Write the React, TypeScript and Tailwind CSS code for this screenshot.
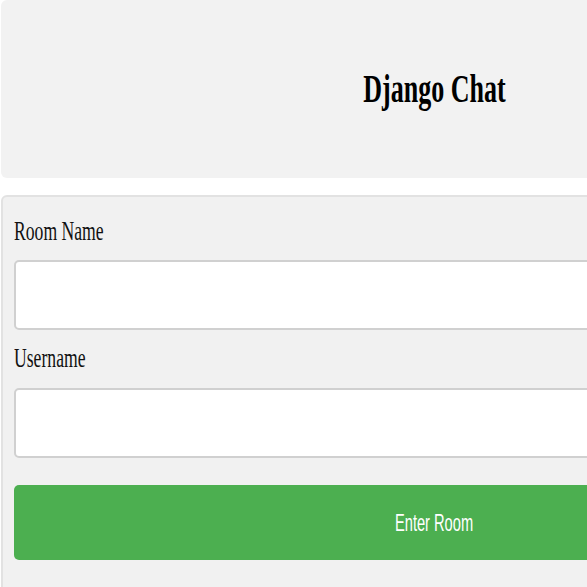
export default function App() {
  return (
    <div className="w-full min-h-screen overflow-hidden bg-white">
      <div className="w-[868px] pl-[1px]">
        {/* header */}
        <div className="h-[178px] bg-[#f2f2f2] rounded-[6px] flex items-center justify-center">
          <h1 className="font-['Liberation_Serif',serif] font-bold text-[40px] leading-none text-black">
            <span className="inline-block scale-x-[0.65] origin-center">Django Chat</span>
          </h1>
        </div>

        {/* form card */}
        <div className="mt-[17px] h-[420px] bg-[#f1f1f1] border-2 border-[#e2e2e2] rounded-[6px] pt-[19px] px-[11px]">
          <label className="block h-[30px] font-['Liberation_Serif',serif] text-[28px] leading-[30px] text-[#111] whitespace-nowrap">
            <span className="inline-block scale-x-[0.63] origin-left">Room Name</span>
          </label>
          <input
            type="text"
            className="block mt-[14px] w-full h-[70px] bg-white border-2 border-[#d0d0d0] rounded-[5px]"
          />
          <label className="block mt-[13px] h-[30px] font-['Liberation_Serif',serif] text-[28px] leading-[30px] text-[#111] whitespace-nowrap">
            <span className="inline-block scale-x-[0.63] origin-left">Username</span>
          </label>
          <input
            type="text"
            className="block mt-[15px] w-full h-[70px] bg-white border-2 border-[#d0d0d0] rounded-[5px]"
          />
          <button className="mt-[27px] w-full h-[75px] bg-[#4caf50] rounded-[5px] text-white font-['Liberation_Sans',sans-serif] text-[24px] flex items-center justify-center">
            <span className="inline-block scale-x-[0.61] origin-center">Enter Room</span>
          </button>
        </div>
      </div>
    </div>
  );
}
